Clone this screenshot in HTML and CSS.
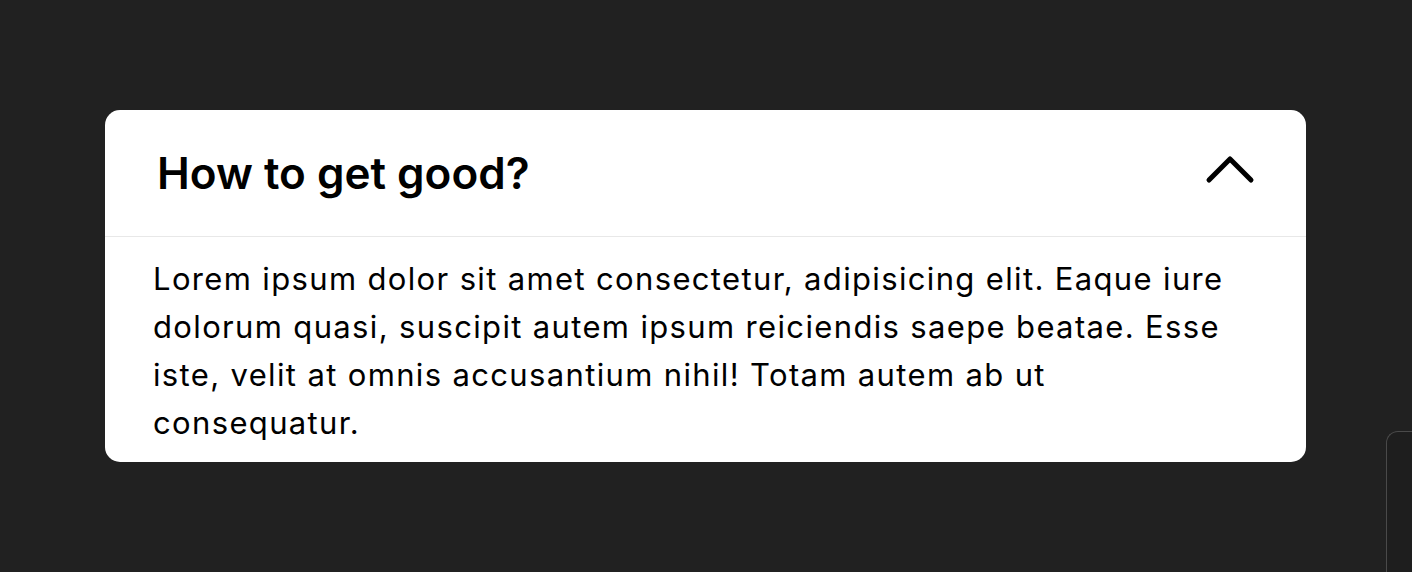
FILE: index.html
```html
<!DOCTYPE html>
<html lang="en">
<head>
<meta charset="utf-8">
<title>Accordion</title>
<link rel="stylesheet" href="styles.css">
</head>
<body>
  <section class="accordion">
    <div class="accordion-header">
      <h2 class="accordion-title">How to get good?</h2>
      <svg class="chevron" width="50" height="30" viewBox="0 0 50 30" aria-hidden="true">
        <path d="M4 25 L25 4 L46 25" fill="none" stroke="#000" stroke-width="5" stroke-linecap="round" stroke-linejoin="round"/>
      </svg>
    </div>
    <div class="accordion-body">
      <p class="accordion-text">Lorem ipsum dolor sit amet consectetur, adipisicing elit. Eaque iure dolorum quasi, suscipit autem ipsum reiciendis saepe beatae. Esse iste, velit at omnis accusantium nihil! Totam autem ab ut consequatur.</p>
    </div>
  </section>
  <div class="corner-panel"></div>
</body>
</html>
```

FILE: styles.css
```css
* { box-sizing: border-box; }

html, body {
  margin: 0;
  padding: 0;
}

body {
  background: #212121;
  min-height: 100vh;
  display: flex;
  align-items: center;
  justify-content: center;
  font-family: "Inter", "Open Sans", sans-serif;
  color: #000;
  overflow: hidden;
  position: relative;
}

.accordion {
  width: 1201px;
  margin-right: 1px;
  background: #fff;
  border-radius: 15px;
  overflow: hidden;
}

.accordion-header {
  height: 127px;
  display: flex;
  align-items: center;
  justify-content: space-between;
  padding: 0 51px 0 52px;
  border-bottom: 1px solid #e8e8e8;
}

.accordion-title {
  margin: 0;
  font-size: 44px;
  font-weight: 600;
  letter-spacing: 0;
}

.chevron {
  display: block;
  margin-top: -6px;
}

.accordion-body {
  padding: 18px 48px 15px 48px;
}

.accordion-text {
  margin: 0;
  font-size: 31px;
  line-height: 48px;
  font-weight: 400;
  letter-spacing: 1.35px;
}

.corner-panel {
  position: absolute;
  right: 0;
  top: 431px;
  width: 26px;
  height: 141px;
  border: 1px solid #4a4a4a;
  border-right: none;
  border-bottom: none;
  border-top-left-radius: 12px;
  background: #1e1e1e;
}
```
